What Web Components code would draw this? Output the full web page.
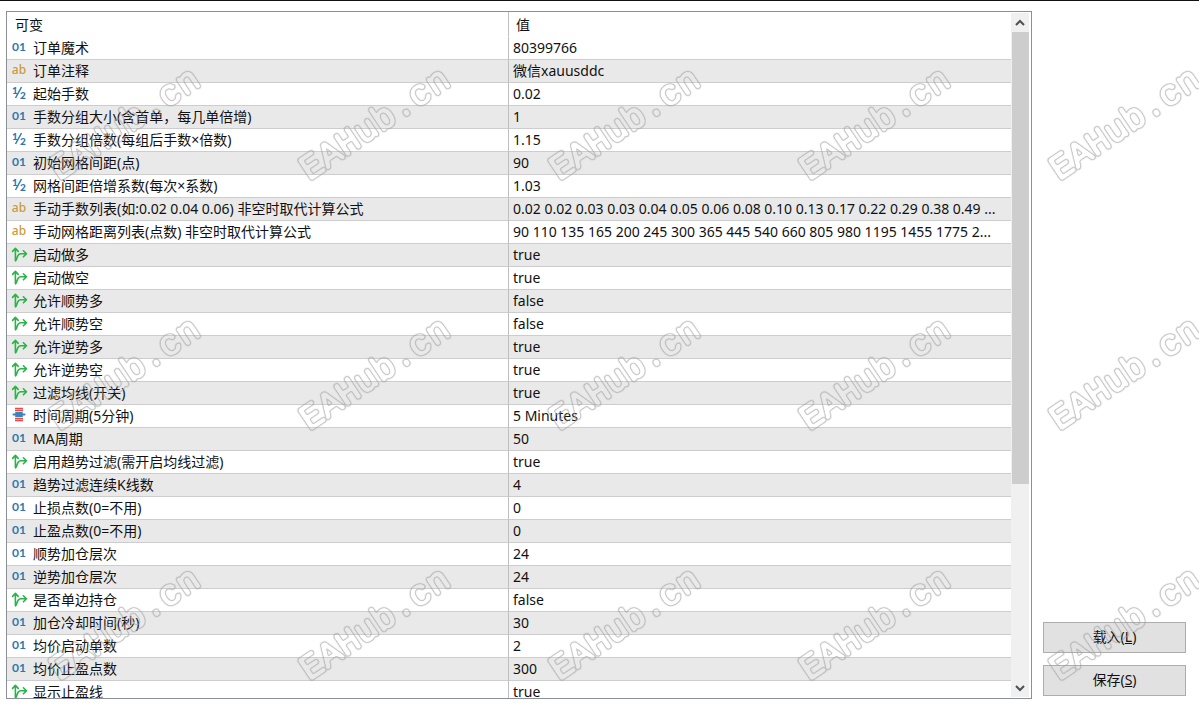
<!DOCTYPE html>
<html lang="zh-CN">
<head>
<meta charset="utf-8">
<title>参数</title>
<style>
html, body { margin: 0; height: 100%; background: #fff; }
body { font: 14px/22px "Noto Sans", "Noto Sans CJK SC", sans-serif; color: #111; }
</style>
</head>
<body>
<settings-page></settings-page>
<script>
function define(name, html, init) {
  const t = document.createElement('template');
  t.innerHTML = html;
  customElements.define(name, class extends HTMLElement {
    constructor() {
      super();
      this.attachShadow({ mode: 'open' }).append(t.content.cloneNode(true));
    }
    connectedCallback() { if (init) init(this, this.shadowRoot); }
  });
}

const ICONS = {
  int: '<text x="7" y="11" class="n">01</text>',
  str: '<text x="7" y="11" class="s">ab</text>',
  dbl: '<text x="3" y="8" class="h">1</text><text x="11" y="13" class="h">2</text><path d="M3.5 12 9.5 1" stroke="#2f78ae" stroke-width="1.5"/>',
  bool: '<g fill="none" stroke="#28b446" stroke-width="1.6" stroke-linecap="round" stroke-linejoin="round"><path d="M3.4 13.6V1.6M.6 4.4 3.4 1.4 6.2 4.4M3.6 13.8C5.4 12.6 4.6 7.1 8.6 6.8H14.2M11.4 3.8 14.5 6.8 11.4 9.8"/></g>',
  enum: '<g fill="none" stroke="#e84848" stroke-width="1.4"><path d="M3 .5h8M3 2.5h8M3 10.5h8M3 12.5h8"/></g><g fill="none" stroke="#3a84bb" stroke-width="1.8" stroke-linecap="round"><path d="M4 4.8h6M1.4 6.5h11.2M4 8.2h6"/></g>'
};

define('type-icon', `<style>
:host { display: block; flex: none; width: 16px; height: 16px; }
svg { display: block; overflow: visible; }
text { text-anchor: middle; font-family: Lato, sans-serif; }
.n { font-size: 12px; font-weight: 700; fill: #2f78ae; }
.s { font-family: "Noto Sans", sans-serif; font-size: 12px; font-weight: 500; fill: #cb9a3c; }
.h { font-size: 10px; font-weight: 900; fill: #2f78ae; }
</style><svg width="16" height="16" viewBox="0 0 16 16"></svg>`,
(el, root) => { root.querySelector('svg').innerHTML = ICONS[el.getAttribute('kind')]; });

const ROWS = [
  ['int', '订单魔术', '80399766'],
  ['str', '订单注释', '微信xauusddc'],
  ['dbl', '起始手数', '0.02'],
  ['int', '手数分组大小(含首单，每几单倍增)', '1'],
  ['dbl', '手数分组倍数(每组后手数×倍数)', '1.15'],
  ['int', '初始网格间距(点)', '90'],
  ['dbl', '网格间距倍增系数(每次×系数)', '1.03'],
  ['str', '手动手数列表(如:0.02 0.04 0.06) 非空时取代计算公式', '0.02 0.02 0.03 0.03 0.04 0.05 0.06 0.08 0.10 0.13 0.17 0.22 0.29 0.38 0.49 ...'],
  ['str', '手动网格距离列表(点数) 非空时取代计算公式', '90 110 135 165 200 245 300 365 445 540 660 805 980 1195 1455 1775 2...'],
  ['bool', '启动做多', 'true'],
  ['bool', '启动做空', 'true'],
  ['bool', '允许顺势多', 'false'],
  ['bool', '允许顺势空', 'false'],
  ['bool', '允许逆势多', 'true'],
  ['bool', '允许逆势空', 'true'],
  ['bool', '过滤均线(开关)', 'true'],
  ['enum', '时间周期(5分钟)', '5 Minutes'],
  ['int', 'MA周期', '50'],
  ['bool', '启用趋势过滤(需开启均线过滤)', 'true'],
  ['int', '趋势过滤连续K线数', '4'],
  ['int', '止损点数(0=不用)', '0'],
  ['int', '止盈点数(0=不用)', '0'],
  ['int', '顺势加仓层次', '24'],
  ['int', '逆势加仓层次', '24'],
  ['bool', '是否单边持仓', 'false'],
  ['int', '加仓冷却时间(秒)', '30'],
  ['int', '均价启动单数', '2'],
  ['int', '均价止盈点数', '300'],
  ['bool', '显示止盈线', 'true']
];

define('param-table', `<style>
:host { display: block; flex: 1; min-width: 0; overflow: hidden; }
table { width: 100%; table-layout: fixed; border-collapse: separate; border-spacing: 0; }
th, td { padding: 0; text-align: left; font-weight: 400; white-space: nowrap; overflow: hidden; }
th { height: 22px; padding: 2px 0 0 8px; }
td { height: 22px; border-top: 1px solid #cdcdcd; padding-left: 4px; }
td:first-child { padding-left: 5px; }
tr > :first-child { border-right: 1px solid #bfbfbf; }
tbody tr:first-child td { border-top-color: transparent; }
tbody tr:nth-child(even) td { background: #e9e9e9; }
th:last-child { padding-left: 7px; }
.name { display: flex; align-items: center; gap: 5px; }
</style>
<table><thead><tr><th scope="col">可变</th><th scope="col">值</th></tr></thead><tbody></tbody></table>`,
(el, root) => {
  root.querySelector('tbody').innerHTML = ROWS.map(([k, n, v]) =>
    `<tr><td><div class="name"><type-icon kind="${k}"></type-icon><span>${n}</span></div></td><td>${v}</td></tr>`).join('');
});

define('scroll-rail', `<style>
:host { display: flex; flex-direction: column; flex: none; width: 18px; margin: 1px 2px 1px 0; background: #f0f0f0; }
button { flex: none; height: 19px; padding: 0; border: 0; background: none; display: grid; place-items: center; }
.track { flex: 1; }
.thumb { height: 70%; margin-left: 1px; background: #cdcdcd; }
path { fill: none; stroke: #505050; stroke-width: 2; }
</style>
<button aria-label="向上"><svg width="10" height="8"><path d="M1 6 5 2 9 6"/></svg></button>
<div class="track"><div class="thumb"></div></div>
<button aria-label="向下"><svg width="10" height="8"><path d="M1 2 5 6 9 2"/></svg></button>`);

define('push-button', `<style>
:host { display: block; }
button { display: block; width: 100%; height: 31px; padding: 0 0 2px; font: inherit; color: inherit; background: #e1e1e1; border: 1px solid #adadad; }
</style><button><slot></slot></button>`);

/* Outlined, tilted word repeated every 250px; the filter keeps only the soft rim of the letters. */
define('water-mark', `<style>
:host { position: absolute; inset: 0; overflow: hidden; pointer-events: none; display: grid; grid-template-columns: repeat(auto-fill, 250px); grid-auto-rows: 250px; width: calc(100% + 250px); }
svg { display: block; overflow: visible; }
text { font-family: "Liberation Mono", monospace; font-size: 36px; text-anchor: middle; }
</style>`,
(el, root) => {
  for (let i = 0; i < 15; i++) root.append(
    document.createRange().createContextualFragment(
      `<svg width="250" height="250" aria-hidden="true"><defs><filter id="o${i}" filterUnits="userSpaceOnUse" x="0" y="0" width="250" height="250" color-interpolation-filters="sRGB"><feGaussianBlur in="SourceAlpha" stdDeviation="1"/><feComponentTransfer result="b"><feFuncA type="table" tableValues="0 .55 .5 .1 0 0 0 0 0"/></feComponentTransfer><feFlood flood-color="#a0a0a0"/><feComposite in2="b" operator="in"/></filter></defs><g filter="url(#o${i})"><text transform="translate(131 132) rotate(-34)">EAHub.cn</text></g></svg>`));
});

define('settings-page', `<style>
:host { display: flex; position: relative; box-sizing: border-box; height: 100vh; min-height: 200px; padding: 10px 13px 11px 6px; gap: 11px; border-top: 1px solid #111; overflow: hidden; }
.panel { flex: 1; min-width: 0; display: flex; border: 1px solid #8b8f98; }
.side { flex: none; width: 143px; display: flex; flex-direction: column; justify-content: flex-end; gap: 12px; padding-bottom: 3px; }
</style>
<div class="panel"><param-table></param-table><scroll-rail></scroll-rail></div>
<div class="side"><push-button>载入(<u>L</u>)</push-button><push-button>保存(<u>S</u>)</push-button></div>
<water-mark></water-mark>`);
</script>
</body>
</html>
